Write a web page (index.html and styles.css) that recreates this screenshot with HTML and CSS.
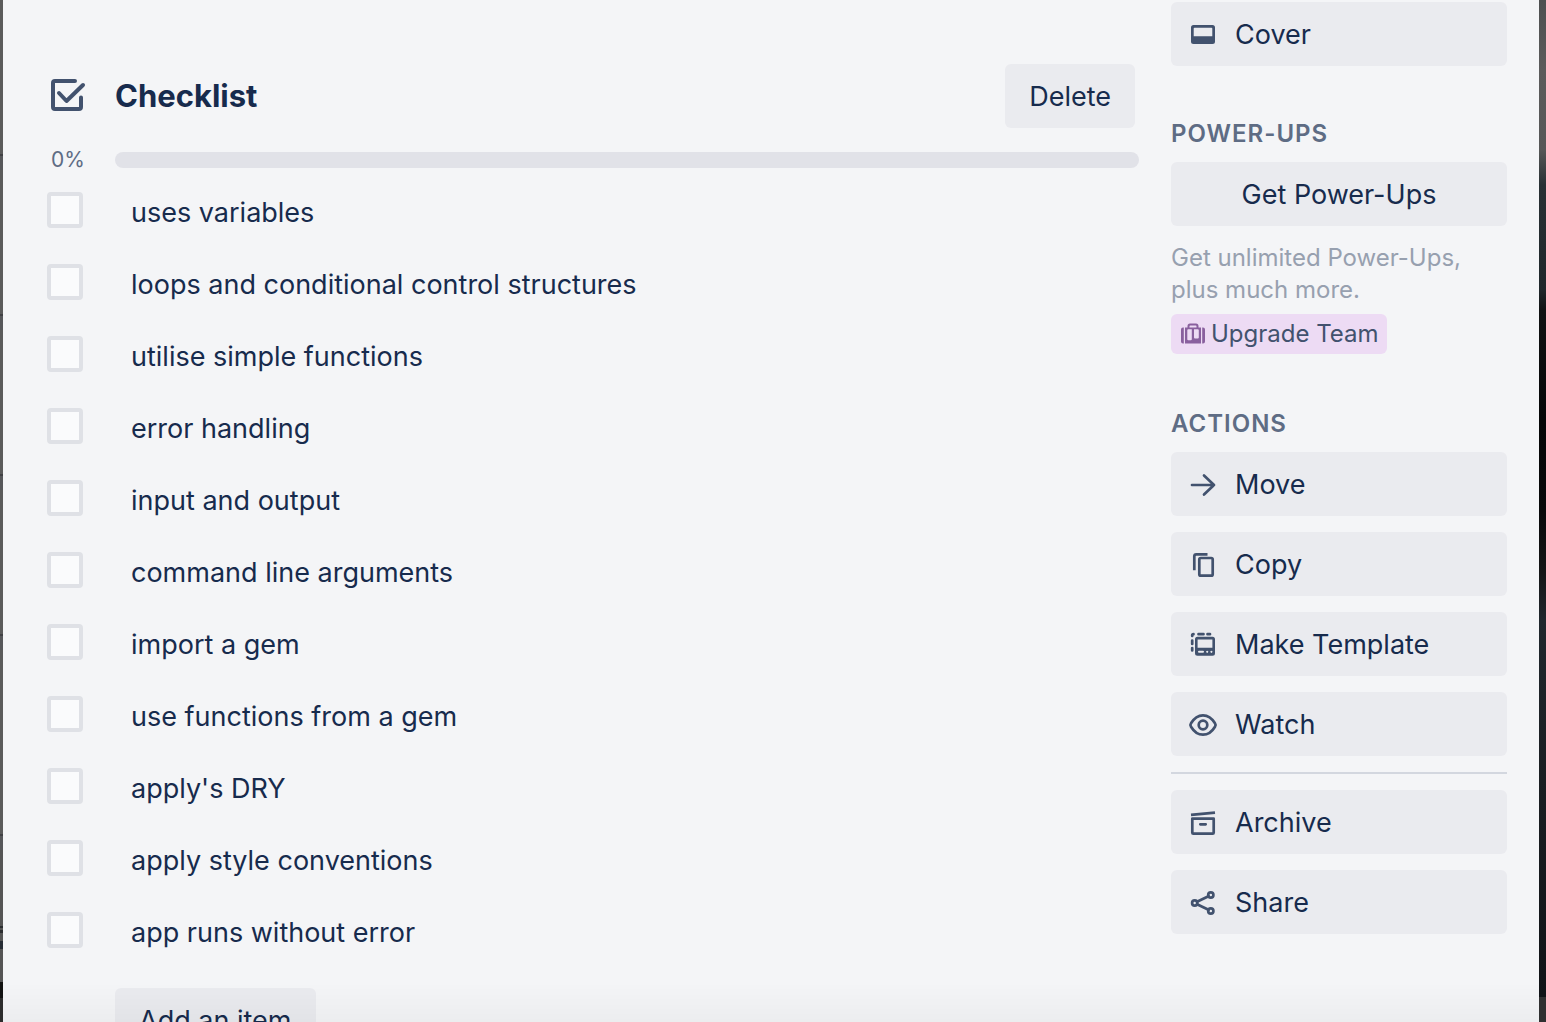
FILE: index.html
```html
<!DOCTYPE html>
<html lang="en">
<head>
<meta charset="utf-8">
<meta name="viewport" content="width=device-width, initial-scale=1">
<title>Card checklist</title>
<link rel="stylesheet" href="styles.css">
</head>
<body>
<div class="board">
  <div class="board-edge board-edge-left"></div>
  <div class="card">
    <main class="main">
      <header class="checklist-header">
        <svg class="checklist-icon" viewBox="0 0 40 40" aria-hidden="true"><path d="M28 5H8a2 2 0 0 0-2 2v24a2 2 0 0 0 2 2h24a2 2 0 0 0 2-2v-9.500M12 17l7.500 8L36 9"/></svg>
        <h2 class="checklist-title">Checklist</h2>
        <button class="button" type="button">Delete</button>
      </header>
      <div class="progress">
        <span class="progress-value">0%</span>
        <div class="progress-track" role="progressbar" aria-label="Checklist progress" aria-valuenow="0" aria-valuemin="0" aria-valuemax="100"></div>
      </div>
      <ul class="items">
        <li><label class="item"><input class="tick" type="checkbox"><span>uses variables</span></label></li>
        <li><label class="item"><input class="tick" type="checkbox"><span>loops and conditional control structures</span></label></li>
        <li><label class="item"><input class="tick" type="checkbox"><span>utilise simple functions</span></label></li>
        <li><label class="item"><input class="tick" type="checkbox"><span>error handling</span></label></li>
        <li><label class="item"><input class="tick" type="checkbox"><span>input and output</span></label></li>
        <li><label class="item"><input class="tick" type="checkbox"><span>command line arguments</span></label></li>
        <li><label class="item"><input class="tick" type="checkbox"><span>import a gem</span></label></li>
        <li><label class="item"><input class="tick" type="checkbox"><span>use functions from a gem</span></label></li>
        <li><label class="item"><input class="tick" type="checkbox"><span>apply's DRY</span></label></li>
        <li><label class="item"><input class="tick" type="checkbox"><span>apply style conventions</span></label></li>
        <li><label class="item"><input class="tick" type="checkbox"><span>app runs without error</span></label></li>
      </ul>
      <button class="button add-item" type="button">Add an item</button>
    </main>
    <aside class="sidebar">
      <button class="button side-button" type="button">
        <svg class="icon" viewBox="0 0 32 32" aria-hidden="true"><path class="solid" fill-rule="evenodd" d="M6.500 6h19A2.500 2.500 0 0 1 28 8.500v14a2.500 2.500 0 0 1-2.500 2.500h-19A2.500 2.500 0 0 1 4 22.500v-14A2.500 2.500 0 0 1 6.500 6zM7.500 8.700a.8.800 0 0 0-.8.800v7.800h18.600V9.500a.8.800 0 0 0-.8-.8z"/></svg>
        Cover
      </button>
      <section class="group">
        <h3 class="group-title">POWER-UPS</h3>
        <button class="button side-button centered" type="button">Get Power-Ups</button>
        <p class="note">Get unlimited Power-Ups, plus much more.</p>
        <a class="upgrade" href="#upgrade">
          <svg class="upgrade-icon" viewBox="0 0 24 24" aria-hidden="true"><path fill-rule="evenodd" d="M4 5.500h2.500V4A2.500 2.500 0 0 1 9 1.500h6A2.500 2.500 0 0 1 17.500 4v1.500H20v16H4zM8.500 4.200v1.300h7V4.200a.7.700 0 0 0-.7-.7H9.200a.7.700 0 0 0-.7.700zM7.300 7.300a1 1 0 0 0-1 1v9a1 1 0 0 0 1 1h2.500a1 1 0 0 0 1-1v-10zm5.700 0v8.200a1 1 0 0 0 1 1h2.800a1 1 0 0 0 1-1V8.300a1 1 0 0 0-1-1zM2.800 5.500v16H2a2 2 0 0 1-2-2v-12a2 2 0 0 1 2-2zM21.200 5.500h.8a2 2 0 0 1 2 2v12a2 2 0 0 1-2 2h-.8z"/></svg>
          Upgrade Team
        </a>
      </section>
      <section class="group">
        <h3 class="group-title">ACTIONS</h3>
        <div class="actions">
          <button class="button side-button" type="button">
            <svg class="icon" viewBox="0 0 32 32" aria-hidden="true"><path d="M5 16h22M17 6.500L27 16l-10 9.500"/></svg>
            Move
          </button>
          <button class="button side-button" type="button">
            <svg class="icon" viewBox="0 0 32 32" aria-hidden="true"><path class="butt" d="M20.500 5.300H9.300a2 2 0 0 0-2 2v14"/><rect x="12.300" y="9" width="13.400" height="17.700" rx="1.500"/></svg>
            Copy
          </button>
          <button class="button side-button" type="button">
            <svg class="icon" viewBox="0 0 32 32" aria-hidden="true"><path d="M5.200 7V6.500A1.300 1.300 0 0 1 6.500 5.200M11.500 5.200h5M20.500 5.200h2.500M5.200 11.500v3.500M5.200 19v2.500"/><path class="solid" fill-rule="evenodd" d="M10.500 7.700h15A2.500 2.500 0 0 1 28 10.200v14a2.500 2.500 0 0 1-2.500 2.500h-15A2.500 2.500 0 0 1 8 24.200v-14a2.500 2.500 0 0 1 2.500-2.500zM10.600 10.400v8.300h14.800v-8.300zM12 21.700a1 1 0 0 0 0 2h4a1 1 0 0 0 0-2zM20.200 21.700a1 1 0 1 0 .01 0zM24.400 21.700a1 1 0 1 0 .01 0z"/></svg>
            Make Template
          </button>
          <button class="button side-button" type="button">
            <svg class="icon" viewBox="0 0 32 32" aria-hidden="true"><path d="M16 6.300c5 0 9 3 12 8a3 3 0 0 1 0 3.400c-3 5-7 8-12 8s-9-3-12-8a3 3 0 0 1 0-3.400c3-5 7-8 12-8z"/><circle cx="16" cy="16" r="4.300"/></svg>
            Watch
          </button>
        </div>
        <hr class="divider">
        <div class="actions">
          <button class="button side-button" type="button">
            <svg class="icon" viewBox="0 0 32 32" aria-hidden="true"><path class="butt" d="M4 7.800l24-2.200"/><path d="M5.300 11.700h21.400v14a1 1 0 0 1-1 1H6.300a1 1 0 0 1-1-1zM13.300 17.300h5.400"/></svg>
            Archive
          </button>
          <button class="button side-button" type="button">
            <svg class="icon" viewBox="0 0 32 32" aria-hidden="true"><circle cx="7.700" cy="16" r="2.600"/><circle cx="23.800" cy="8" r="2.600"/><circle cx="23.800" cy="24" r="2.600"/><path d="M10 14.700l11.500-5.500M10 17.300l11.500 5.500"/></svg>
            Share
          </button>
        </div>
      </section>
    </aside>
  </div>
  <div class="board-edge board-edge-right"></div>
  <div class="bottom-shade"></div>
</div>
</body>
</html>
```
FILE: styles.css
```css
* {
  box-sizing: border-box;
}

body {
  margin: 0;
  color: #172b4d;
  font-family: Inter, "Liberation Sans", sans-serif;
  font-size: 27px;
  line-height: 40px;
}

.board {
  display: flex;
  height: 100vh;
  overflow: hidden;
  background: #f4f5f7;
}

.board-edge {
  flex: none;
  height: 100vh;
}

/* Slivers of the dimmed board on either side of the card */
.board-edge-left {
  width: 3px;
  background: linear-gradient(#5b5b5b 0 154px, #404144 154px 156px, #56575a 156px 170px, #5b5b5b 170px 314px, #404144 314px 316px, #56575a 316px 330px, #5b5b5b 330px 474px, #404144 474px 476px, #56575a 476px 490px, #5b5b5b 490px 634px, #404144 634px 636px, #56575a 636px 650px, #5b5b5b 650px 834px, #404144 834px 836px, #56575a 836px 850px, #555 850px 926px, #2b2d30 926px 928px, #555 928px 930px, #2b2d30 930px 933px, #555 933px 941px, #262c35 941px 949px, #555 949px 982px, #121212 982px 998px, #2c2c2c 998px);
}

.board-edge-right {
  width: 7px;
  background: linear-gradient(#4d4f50, #5b5b5b 70px, #565757 150px, #283034 185px, #1f272b 290px, #101213 310px, #050607 420px, #08090a 510px, #141516 570px, #20272d 620px, #1a1e22 780px, #101317 997px, #303031 997px);
}

.card {
  flex: 1;
  min-width: 0;
  display: flex;
  gap: 32px;
  padding: 0 32px 0 44px;
}

.main {
  flex: 1;
  min-width: 0;
  padding-top: 64px;
}

.checklist-header {
  display: flex;
  align-items: center;
  gap: 28px;
  padding-right: 4px;
}

.checklist-icon {
  flex: none;
  width: 40px;
  height: 40px;
  fill: none;
  stroke: #42526e;
  stroke-width: 4;
  stroke-linecap: round;
  stroke-linejoin: round;
}

.checklist-title {
  flex: 1;
  margin: 0;
  font-size: 31px;
  font-weight: 700;
  line-height: 42px;
}

.button {
  height: 64px;
  padding: 2px 24px 0;
  border: 0;
  border-radius: 6px;
  background: #eaebef;
  color: inherit;
  font: inherit;
  cursor: pointer;
}

.progress {
  display: flex;
  align-items: center;
  height: 16px;
  margin: 24px 0;
}

.progress-value {
  width: 68px;
  padding-left: 4px;
  color: #5e6c84;
  font-size: 21px;
}

.progress-track {
  flex: 1;
  height: 16px;
  border-radius: 8px;
  background: #e1e2e8;
}

.items {
  margin: 0;
  padding: 0;
  list-style: none;
}

.item {
  display: flex;
  gap: 48px;
  min-height: 72px;
  line-height: 42px;
}

.tick {
  appearance: none;
  flex: none;
  width: 36px;
  height: 36px;
  margin: 0;
  border: 4px solid #dfe1e6;
  border-radius: 4px;
  background: #fafbfc;
}

.tick:checked {
  background: #0079bf;
}

.add-item {
  margin: 4px 0 0 68px;
}

.sidebar {
  flex: none;
  width: 336px;
  padding-top: 2px;
}

.side-button {
  display: flex;
  align-items: center;
  gap: 16px;
  width: 100%;
  padding: 1px 16px 0;
}

.centered {
  justify-content: center;
}

.icon {
  flex: none;
  width: 32px;
  height: 32px;
  fill: none;
  stroke: #42526e;
  stroke-width: 2.7;
  stroke-linecap: round;
  stroke-linejoin: round;
}

.icon .solid {
  fill: #42526e;
  stroke: none;
}

.icon .butt {
  stroke-linecap: butt;
}

.group {
  margin-top: 48px;
}

.group + .group {
  margin-top: 50px;
}

.group-title {
  margin: 0 0 8px;
  color: #5e6c84;
  font-size: 24px;
  font-weight: 600;
  letter-spacing: 1px;
}

.note {
  margin: 16px 0 8px;
  color: #97a0af;
  font-size: 24px;
  line-height: 32px;
}

.upgrade {
  display: flex;
  align-items: center;
  gap: 6px;
  width: fit-content;
  padding: 0 8px 0 10px;
  border-radius: 6px;
  background: #eddbf4;
  color: #42526e;
  font-size: 24px;
  text-decoration: none;
}

.upgrade-icon {
  width: 24px;
  height: 24px;
  fill: #89609e;
}

.actions {
  display: grid;
  gap: 16px;
}

.divider {
  height: 2px;
  margin: 16px 0;
  border: 0;
  background: #d3d7df;
}

.bottom-shade {
  position: fixed;
  right: 7px;
  bottom: 0;
  left: 3px;
  height: 40px;
  background: linear-gradient(rgba(0, 0, 0, 0), rgba(0, 0, 0, 0.03));
  pointer-events: none;
}
```
